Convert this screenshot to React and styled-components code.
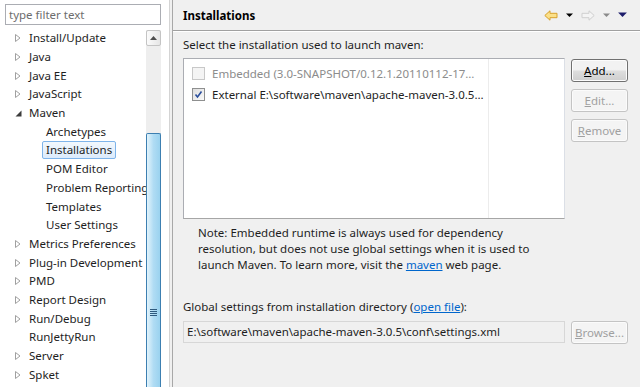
import styled, { createGlobalStyle } from "styled-components";

const GlobalStyle = createGlobalStyle`
  html, body {
    margin: 0;
    padding: 0;
    background: #f0f0f0;
  }
  body {
    font-family: "Noto Sans", "Open Sans", sans-serif;
    font-size: 11.5px;
    color: #1e1e1e;
  }
`;

const Window = styled.div`
  display: flex;
  width: 640px;
  height: 387px;
  overflow: hidden;
  background: #f0f0f0;
`;

const Sidebar = styled.div`
  display: flex;
  flex-direction: column;
  width: 169px;
  flex-shrink: 0;
  background: #ffffff;
  border-right: 1px solid #d4d4d4;
`;

const Filter = styled.div`
  margin: 4px 8px 0 5px;
  height: 19px;
  border: 1px solid #abadb3;
  padding: 0 3px;
  line-height: 19px;
  color: #6d6d6d;
`;

const TreeArea = styled.div`
  display: flex;
  flex: 1;
  margin-top: 4px;
  min-height: 0;
`;

const Tree = styled.ul`
  flex: 1;
  list-style: none;
  margin: 0;
  padding: 0;
  overflow: hidden;
  white-space: nowrap;
`;

const Row = styled.li`
  display: flex;
  align-items: center;
  height: 18.7px;
  padding-left: ${(p) => (p.$level === 2 ? 43 : 15)}px;
`;

const Twisty = styled.span`
  display: inline-flex;
  width: 11px;
  height: 10px;
  align-items: center;
  justify-content: flex-start;
  flex-shrink: 0;
`;

const Label = styled.span`
  padding: 0 3px;
  height: 16px;
  line-height: 16px;
  border: 1px solid ${(p) => (p.$selected ? "#7eb4ea" : "transparent")};
  border-radius: 2px;
  background: ${(p) =>
    p.$selected ? "linear-gradient(#f2f8fd, #dcebfc)" : "transparent"};
  margin-left: -1px;
`;

const Scrollbar = styled.div`
  display: flex;
  flex-direction: column;
  width: 15px;
  margin-right: 8px;
  margin-top: 1px;
  background: #eeeeee;
`;

const ScrollButton = styled.div`
  height: 14px;
  border: 1px solid #c4c4c4;
  border-radius: 2px;
  background: linear-gradient(90deg, #fbfbfb, #e6e6e6);
  display: flex;
  align-items: center;
  justify-content: center;
`;

const Track = styled.div`
  height: 87px;
`;

const Thumb = styled.div`
  flex: 1;
  border: 1px solid #3c7fb1;
  border-bottom: none;
  border-radius: 2px 2px 0 0;
  background: linear-gradient(90deg, #e3f4fc, #b0dcf4 50%, #9ad2ef);
  display: flex;
  align-items: flex-start;
  justify-content: center;
  padding-top: 175px;
  box-sizing: border-box;
`;

const Grip = styled.div`
  width: 7px;
  height: 7px;
  background: repeating-linear-gradient(
    #2e5a7e 0 1px,
    transparent 1px 2px
  );
`;

const Main = styled.div`
  flex: 1;
  display: flex;
  flex-direction: column;
  margin-left: 2px;
  border-left: 1px solid #a8a8a8;
`;

const Header = styled.div`
  display: flex;
  align-items: center;
  justify-content: space-between;
  height: 30px;
  padding: 0 10px 0 10px;
  border-bottom: 1px solid #a0a0a0;
  box-shadow: 0 1px 0 #ffffff;
`;

const Title = styled.h1`
  margin: 0;
  font-size: 11.5px;
  font-weight: 700;
  color: #000;
`;

const Nav = styled.div`
  display: flex;
  align-items: center;
  gap: 8px;
  margin-right: 3px;
`;

const Content = styled.div`
  display: flex;
  flex-direction: column;
  padding: 6px 12px 0 10px;
`;

const Caption = styled.div`
  height: 20px;
  line-height: 16px;
`;

const ListRow = styled.div`
  display: grid;
  grid-template-columns: 1fr 57px;
  column-gap: 6px;
  margin-top: 1px;
`;

const ListBox = styled.div`
  height: 159px;
  border: 1px solid #828790;
  border-color: #abadb3 #dbdfe6 #a6a6a6 #abadb3;
  background: #ffffff;
  display: grid;
  grid-template-columns: 305px 1fr;
`;

const Column = styled.div`
  border-right: 1px solid #ececec;
  padding-top: 4px;
  white-space: nowrap;
  overflow: hidden;
`;

const Entry = styled.div`
  display: flex;
  align-items: center;
  height: 21px;
  padding-left: 8px;
  gap: 7px;
  color: ${(p) => (p.$disabled ? "#8c8c8c" : "#1e1e1e")};
`;

const Check = styled.span`
  width: 11px;
  height: 11px;
  border: 1px solid ${(p) => (p.$disabled ? "#c8c8c8" : "#8e8f8f")};
  background: ${(p) =>
    p.$disabled ? "#f4f4f4" : "linear-gradient(135deg, #dedede, #fafafa)"};
  display: flex;
  align-items: center;
  justify-content: center;
  flex-shrink: 0;
`;

const Buttons = styled.div`
  display: flex;
  flex-direction: column;
  gap: 7px;
  padding-top: 1px;
`;

const Button = styled.button`
  height: 23px;
  padding: 0;
  font: inherit;
  border: 1px solid ${(p) => (p.disabled ? "#c4c4c4" : "#707070")};
  border-radius: 3px;
  color: ${(p) => (p.disabled ? "#a0a0a0" : "#000")};
  background: ${(p) =>
    p.disabled ? "#f4f4f4" : "linear-gradient(#f2f2f2 45%, #dddddd 55%, #cfcfcf)"};
  box-shadow: inset 0 0 0 1px ${(p) => (p.disabled ? "#fbfbfb" : "#fcfcfc")};
  text-align: center;

  u {
    text-decoration: underline;
  }
`;

const Note = styled.p`
  margin: 6px 0 0 15px;
  line-height: 16px;
  width: 360px;
`;

const Link = styled.a`
  color: #0066cc;
  text-decoration: underline;
`;

const Global = styled.div`
  margin-top: 26px;
  line-height: 16px;
`;

const FieldRow = styled.div`
  display: grid;
  grid-template-columns: 1fr 57px;
  column-gap: 6px;
  margin-top: 6px;
`;

const Field = styled.div`
  height: 20px;
  line-height: 20px;
  border: 1px solid #d7d7d7;
  background: #f0f0f0;
  padding-left: 3px;
  white-space: nowrap;
`;

const HollowTri = () => (
  <svg width="6" height="8" viewBox="0 0 6 8">
    <path d="M0.5 0.5 L5 4 L0.5 7.5 Z" fill="#fff" stroke="#a0a0a0" />
  </svg>
);

const OpenTri = () => (
  <svg width="7" height="7" viewBox="0 0 7 7">
    <path d="M6.5 0.5 L6.5 6.5 L0.5 6.5 Z" fill="#3c3c3c" />
  </svg>
);

const CheckMark = () => (
  <svg width="9" height="9" viewBox="0 0 9 9">
    <path d="M1.5 4.5 L3.5 7 L7.5 1.5" fill="none" stroke="#2a4e9c" strokeWidth="1.6" />
  </svg>
);

const BackArrow = () => (
  <svg width="14" height="11" viewBox="0 0 14 11">
    <path
      d="M0.8 5.5 L6 0.8 L6 3.3 L13 3.3 L13 7.7 L6 7.7 L6 10.2 Z"
      fill="#fbe089"
      stroke="#d7a12c"
    />
  </svg>
);

const FwdArrow = () => (
  <svg width="14" height="11" viewBox="0 0 14 11">
    <path
      d="M13.2 5.5 L8 0.8 L8 3.3 L1 3.3 L1 7.7 L8 7.7 L8 10.2 Z"
      fill="#f4f4f4"
      stroke="#cfcfcf"
    />
  </svg>
);

const Drop = ({ color = "#000", size = 7 }) => (
  <svg width={size} height={size / 2 + 1} viewBox="0 0 8 5">
    <path d="M0 0.5 L8 0.5 L4 4.5 Z" fill={color} />
  </svg>
);

const UpArrow = () => (
  <svg width="7" height="4" viewBox="0 0 7 4">
    <path d="M0 4 L3.5 0 L7 4 Z" fill="#4d4d4d" />
  </svg>
);

const tree = [
  { label: "Install/Update", twisty: "closed" },
  { label: "Java", twisty: "closed" },
  { label: "Java EE", twisty: "closed" },
  { label: "JavaScript", twisty: "closed" },
  { label: "Maven", twisty: "open" },
  { label: "Archetypes", level: 2 },
  { label: "Installations", level: 2, selected: true },
  { label: "POM Editor", level: 2 },
  { label: "Problem Reporting", level: 2 },
  { label: "Templates", level: 2 },
  { label: "User Settings", level: 2 },
  { label: "Metrics Preferences", twisty: "closed" },
  { label: "Plug-in Development", twisty: "closed" },
  { label: "PMD", twisty: "closed" },
  { label: "Report Design", twisty: "closed" },
  { label: "Run/Debug", twisty: "closed" },
  { label: "RunJettyRun" },
  { label: "Server", twisty: "closed" },
  { label: "Spket", twisty: "closed" },
];

function App() {
  return (
    <>
      <GlobalStyle />
      <Window>
        <Sidebar>
          <Filter>type filter text</Filter>
          <TreeArea>
            <Tree>
              {tree.map((item) => (
                <Row key={item.label} $level={item.level}>
                  {item.level !== 2 && (
                    <Twisty>
                      {item.twisty === "closed" && <HollowTri />}
                      {item.twisty === "open" && <OpenTri />}
                    </Twisty>
                  )}
                  <Label $selected={item.selected}>{item.label}</Label>
                </Row>
              ))}
            </Tree>
            <Scrollbar>
              <ScrollButton>
                <UpArrow />
              </ScrollButton>
              <Track />
              <Thumb>
                <Grip />
              </Thumb>
            </Scrollbar>
          </TreeArea>
        </Sidebar>

        <Main>
          <Header>
            <Title>Installations</Title>
            <Nav>
              <BackArrow />
              <Drop />
              <FwdArrow />
              <Drop color="#8a8a8a" />
              <Drop color="#1d1d6b" size={9} />
            </Nav>
          </Header>

          <Content>
            <Caption>Select the installation used to launch maven:</Caption>
            <ListRow>
              <ListBox>
                <Column>
                  <Entry $disabled>
                    <Check $disabled />
                    Embedded (3.0-SNAPSHOT/0.12.1.20110112-17…
                  </Entry>
                  <Entry>
                    <Check>
                      <CheckMark />
                    </Check>
                    External E:\software\maven\apache-maven-3.0.5…
                  </Entry>
                </Column>
                <div />
              </ListBox>
              <Buttons>
                <Button>
                  <u>A</u>dd...
                </Button>
                <Button disabled>
                  <u>E</u>dit...
                </Button>
                <Button disabled>
                  <u>R</u>emove
                </Button>
              </Buttons>
            </ListRow>

            <Note>
              Note: Embedded runtime is always used for dependency resolution,
              but does not use global settings when it is used to launch Maven.
              To learn more, visit the <Link>maven</Link> web page.
            </Note>

            <Global>
              Global settings from installation directory (
              <Link>open file</Link>):
            </Global>
            <FieldRow>
              <Field>E:\software\maven\apache-maven-3.0.5\conf\settings.xml</Field>
              <Button disabled>
                <u>B</u>rowse...
              </Button>
            </FieldRow>
          </Content>
        </Main>
      </Window>
    </>
  );
}

export default App;
